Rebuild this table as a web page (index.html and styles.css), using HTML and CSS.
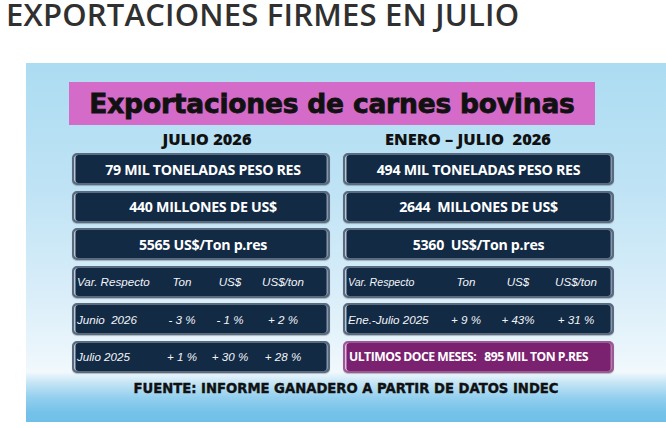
FILE: index.html
```html
<!DOCTYPE html>
<html lang="es">
<head>
<meta charset="utf-8">
<title>Exportaciones firmes en julio</title>
<link rel="stylesheet" href="styles.css">
</head>
<body>
<h1 class="page-title">EXPORTACIONES FIRMES EN JULIO</h1>
<section class="panel">
  <div class="banner">Exportaciones de carnes bovinas</div>
  <div class="columns">
    <div class="col col-left">
      <div class="heading">JULIO 2026</div>
      <div class="box big">79 MIL TONELADAS PESO RES</div>
      <div class="box big">440 MILLONES DE US$</div>
      <div class="box big">5565 US$/Ton p.res</div>
      <div class="box var">
        <span class="lbl">Var. Respecto</span><span class="v">Ton</span><span class="v">US$</span><span class="v">US$/ton</span>
      </div>
      <div class="box var">
        <span class="lbl">Junio&nbsp; 2026</span><span class="v">- 3 %</span><span class="v">- 1 %</span><span class="v">+ 2 %</span>
      </div>
      <div class="box var">
        <span class="lbl">Julio 2025</span><span class="v">+ 1 %</span><span class="v">+ 30 %</span><span class="v">+ 28 %</span>
      </div>
    </div>
    <div class="col col-right">
      <div class="heading">ENERO – JULIO&nbsp; 2026</div>
      <div class="box big">494 MIL TONELADAS PESO RES</div>
      <div class="box big">2644&nbsp; MILLONES DE US$</div>
      <div class="box big">5360&nbsp; US$/Ton p.res</div>
      <div class="box var">
        <span class="lbl small">Var. Respecto</span><span class="v">Ton</span><span class="v">US$</span><span class="v">US$/ton</span>
      </div>
      <div class="box var">
        <span class="lbl">Ene.-Julio 2025</span><span class="v">+ 9 %</span><span class="v">+ 43%</span><span class="v">+ 31 %</span>
      </div>
      <div class="box purple">ULTIMOS DOCE MESES:&nbsp;&nbsp; 895 MIL TON P.RES</div>
    </div>
  </div>
  <div class="source">FUENTE: INFORME GANADERO A PARTIR DE DATOS INDEC</div>
</section>
</body>
</html>
```
FILE: styles.css
```css
html, body {
  margin: 0;
  padding: 0;
  background: #ffffff;
}
body {
  width: 666px;
  height: 428px;
  overflow: hidden;
  font-family: "Open Sans", "Liberation Sans", sans-serif;
}
.page-title {
  margin: -4px 0 0 0;
  padding-left: 6px;
  font-family: "Open Sans", "Liberation Sans", sans-serif;
  font-weight: 600;
  font-size: 31px;
  line-height: 36px;
  letter-spacing: 0.2px;
  color: #303030;
  white-space: nowrap;
}
.panel {
  margin: 31px 0 0 26px;
  width: 640px;
  height: 359px;
  box-sizing: border-box;
  padding-top: 19px;
  background: linear-gradient(to bottom,
    #acdcf2 0%,
    #bfe3f5 35%,
    #daeef9 65%,
    #eef7fc 84%,
    #f2f9fd 86%,
    #c6e5f5 89%,
    #95d0ee 93%,
    #76c3e9 97%,
    #6ebfe8 100%);
}
.banner {
  margin-left: 43px;
  width: 526px;
  height: 43px;
  background: #d56bc9;
  font-family: "DejaVu Sans", "Liberation Sans", sans-serif;
  font-weight: 700;
  font-size: 26.5px;
  line-height: 43px;
  text-align: center;
  color: #111111;
  letter-spacing: -0.2px;
  -webkit-text-stroke: 0.8px #111111;
}
.columns {
  display: flex;
  gap: 13px;
  margin-left: 46px;
}
.col {
  display: flex;
  flex-direction: column;
  gap: 5.6px;
}
.col-left { width: 258px; }
.col-right { width: 271px; }
.heading {
  height: 28px;
  margin-bottom: -5.6px;
  font-family: "Open Sans", "Liberation Sans", sans-serif;
  font-weight: 800;
  font-size: 16.4px;
  line-height: 28px;
  color: #111111;
  text-align: center;
  white-space: nowrap;
}
.col-left .heading { padding-left: 12px; }
.col-right .heading { padding-right: 21px; }
.box {
  box-sizing: border-box;
  height: 32px;
  background: #132a45;
  border: 2px solid #5a6b7f;
  border-radius: 5px;
  box-shadow: inset 1.5px 0 0 #b9c6d3, inset -1.5px 0 0 #8596a8, 0 1px 1px rgba(0, 0, 0, 0.25);
  color: #ffffff;
  white-space: nowrap;
}
.big {
  display: flex;
  align-items: center;
  justify-content: center;
  font-family: "Open Sans", "Liberation Sans", sans-serif;
  font-weight: 700;
  font-size: 14.2px;
  letter-spacing: -0.3px;
}
.col-left .big { padding-left: 4px; }
.var {
  display: grid;
  align-items: center;
  font-family: "Liberation Sans", Arial, sans-serif;
  font-style: italic;
  font-size: 11.6px;
  color: #f2f4f8;
}
.col-left .var { grid-template-columns: 86px 44px 52px 54px; }
.col-right .var { grid-template-columns: 95px 52px 52px 64px; }
.var .lbl { padding-left: 3px; }
.var .lbl.small { font-size: 10.6px; }
.var .v { text-align: center; }
.purple {
  display: flex;
  align-items: center;
  padding-left: 4px;
  background: #7a2270;
  border-color: #9a5a94;
  box-shadow: inset 1.5px 0 0 #e8b8e2, inset -1.5px 0 0 #b77aae, 0 1px 1px rgba(0, 0, 0, 0.25);
  font-family: "Open Sans", "Liberation Sans", sans-serif;
  font-weight: 700;
  font-size: 12.2px;
  letter-spacing: -0.5px;
}
.source {
  margin-top: 7px;
  text-align: center;
  font-family: "DejaVu Sans", "Liberation Sans", sans-serif;
  font-weight: 700;
  font-size: 13.2px;
  line-height: 18px;
  color: #111111;
  white-space: nowrap;
  -webkit-text-stroke: 0.4px #111111;
}
```
